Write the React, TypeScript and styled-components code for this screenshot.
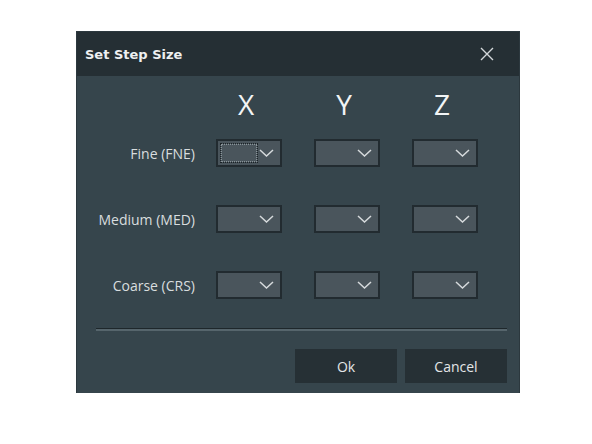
import React from 'react';
import styled, { createGlobalStyle } from 'styled-components';

const GlobalStyle = createGlobalStyle`
  body {
    margin: 0;
    background: #ffffff;
    font-family: "Open Sans", "Liberation Sans", sans-serif;
  }
`;

const Page = styled.div`
  padding: 32px 0 0 77px;
`;

const Dialog = styled.div`
  width: 442px;
  background: #36454c;
  display: flex;
  flex-direction: column;
  box-shadow: 0 0 0 1px #2c383e;
`;

const TitleBar = styled.div`
  height: 44px;
  background: #252f34;
  display: flex;
  align-items: center;
  justify-content: space-between;
  padding: 0 22px 0 8px;
`;

const Title = styled.span`
  font-family: "DejaVu Sans", Verdana, sans-serif;
  font-weight: bold;
  font-size: 13px;
  color: #eef0f1;
`;

const CloseButton = styled.button`
  width: 20px;
  height: 20px;
  padding: 0;
  border: none;
  background: transparent;
  display: flex;
  align-items: center;
  justify-content: center;
`;

const Body = styled.div`
  padding: 10px 12px 10px 19px;
  display: flex;
  flex-direction: column;
`;

const Grid = styled.div`
  display: grid;
  grid-template-columns: 120px repeat(3, 98px);
  grid-auto-rows: 28px;
  row-gap: 38px;
  align-items: center;
`;

const HeaderRow = styled.div`
  display: grid;
  grid-template-columns: 120px repeat(3, 98px);
  height: 36px;
  margin-bottom: 17px;
`;

const AxisHeader = styled.span`
  width: 66px;
  text-align: center;
  font-size: 28px;
  line-height: 36px;
  color: #f2f4f5;
  margin-left: -3px;
`;

const RowLabel = styled.span`
  text-align: right;
  padding-right: 21px;
  font-size: 14px;
  color: #d9dddf;
`;

const SelectBox = styled.div`
  box-sizing: border-box;
  width: 66px;
  height: 28px;
  background: #4a555c;
  border: 2px solid #222b30;
  display: flex;
  align-items: center;
  padding: 0 0 0 2px;
  position: relative;
`;

const FocusRing = styled.div`
  box-sizing: border-box;
  width: 38px;
  height: 20px;
  border: 1px dotted #1b2226;
  outline: 1px dotted #8a9499;
  outline-offset: -2px;
`;

const Chevron = styled.svg`
  position: absolute;
  right: 6px;
  top: 50%;
  margin-top: -4px;
`;

const Separator = styled.div`
  height: 1px;
  background: #1e272b;
  border-bottom: 2px solid #56656c;
  margin: 29px 0 18px;
`;

const Footer = styled.div`
  display: flex;
  justify-content: flex-end;
  gap: 8px;
`;

const ActionButton = styled.button`
  width: 102px;
  height: 34px;
  border: none;
  background: #263035;
  color: #e3e6e7;
  font-family: "Open Sans", "Liberation Sans", sans-serif;
  font-size: 14px;
`;

const Select = ({ focused }: { focused?: boolean }) => (
  <SelectBox>
    {focused && <FocusRing />}
    <Chevron width="15" height="8" viewBox="0 0 15 8">
      <path d="M1 1 L7.5 7 L14 1" fill="none" stroke="#d6dadc" strokeWidth="1.5" />
    </Chevron>
  </SelectBox>
);

const rows = ['Fine (FNE)', 'Medium (MED)', 'Coarse (CRS)'];

const App = () => (
  <Page>
    <GlobalStyle />
    <Dialog>
      <TitleBar>
        <Title>Set Step Size</Title>
        <CloseButton>
          <svg width="14" height="14" viewBox="0 0 14 14">
            <path d="M1 1 L13 13 M13 1 L1 13" stroke="#d3d8da" strokeWidth="1.4" />
          </svg>
        </CloseButton>
      </TitleBar>
      <Body>
        <HeaderRow>
          <span />
          <AxisHeader>X</AxisHeader>
          <AxisHeader>Y</AxisHeader>
          <AxisHeader>Z</AxisHeader>
        </HeaderRow>
        <Grid>
          {rows.map((label, i) => (
            <React.Fragment key={label}>
              <RowLabel>{label}</RowLabel>
              <Select focused={i === 0} />
              <Select />
              <Select />
            </React.Fragment>
          ))}
        </Grid>
        <Separator />
        <Footer>
          <ActionButton>Ok</ActionButton>
          <ActionButton>Cancel</ActionButton>
        </Footer>
      </Body>
    </Dialog>
  </Page>
);

export default App;
